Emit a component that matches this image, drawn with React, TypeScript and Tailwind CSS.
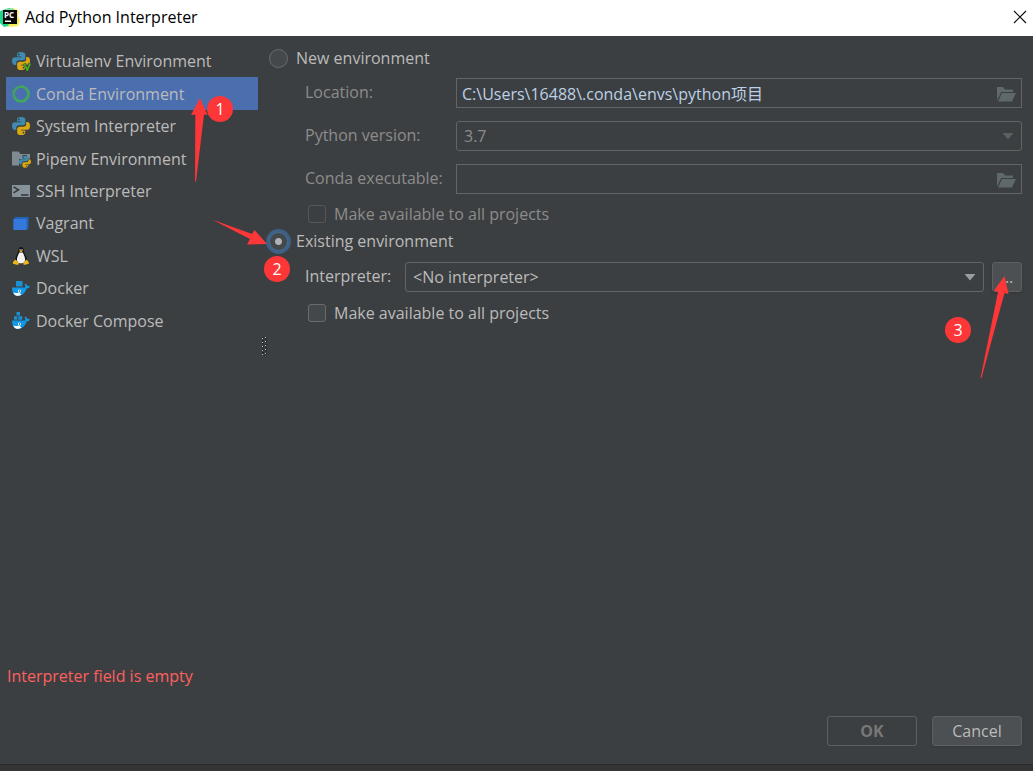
import { useState, type ReactNode } from "react";

const BLUE = "#3e8ab0";
const YELLOW = "#d9a80f";

function PythonShapes() {
  return (
    <>
      <path fill={BLUE} d="M9 0C5.800 0 5 1.200 5 2.600V4.500H9.200V5.200H2.800C1 5.200 0 6.700 0 9s1 3.900 2.700 3.900H4.300V10.900C4.300 9.400 5.500 8.300 7 8.300h4c1.300 0 2.300-1 2.300-2.300V2.600C13.300 1 12 0 9 0ZM6.800 1.500a.9.9 0 1 1 0 1.800.9.9 0 0 1 0-1.800Z" />
      <path fill={YELLOW} d="M9.200 18c3.200 0 4-1.200 4-2.600V13.500H9V12.800h6.300C17.100 12.800 18 11.300 18 9s-.9-3.900-2.600-3.900h-1.200V7.200c0 1.500-1.200 2.500-2.700 2.500h-4c-1.300 0-2.300 1-2.300 2.300v3.400C5.200 17 6.500 18 9.200 18Zm2.200-1.500a.9.9 0 1 1 0-1.800.9.9 0 0 1 0 1.800Z" />
    </>
  );
}

function Icon({ children }: { children: ReactNode }) {
  return (
    <svg className="size-[20px] shrink-0" viewBox="-1 -1 20 20" aria-hidden="true">
      {children}
    </svg>
  );
}

const whale = (
  <>
    <path fill="#0f9ae8" d="M0 8.500h13.200c.2-1 .1-2-.5-2.900l.8-1c.9.6 1.500 1.300 1.700 2.200 1-.1 2 0 2.800.6-.5 1.300-1.700 1.800-3.200 1.900C13.200 13.500 10.500 17 6 17 2.500 17 .2 14.500 0 8.500Z" />
    <path fill="#fff" d="M1.200 13.400c2 .7 4.500 1 6.800.2 0 1 .5 1.700 1.700 2-1.200.9-2.500 1.200-4 1.200-2 0-3.500-1.100-4.500-3.400Z" />
    <circle cx="7.500" cy="12" r="1.500" fill="#fff" />
    <circle cx="7.600" cy="12" r=".7" fill="#234" />
  </>
);

const items: { name: string; icon: ReactNode }[] = [
  {
    name: "Virtualenv Environment",
    icon: (
      <>
        <PythonShapes />
        <path d="m12.500 11.500 2.700 6 2.800-6" fill="none" stroke="#3c3f41" strokeWidth="3" />
        <path d="m12.300 11.500 2.900 6.500 2.900-6.500" fill="none" stroke="#43b81c" strokeWidth="1.700" />
      </>
    ),
  },
  {
    name: "Conda Environment",
    icon: (
      <>
        <circle cx="9" cy="9" r="7.500" fill="none" stroke="#43a85a" strokeWidth="2.700" />
        <path d="M2 12.500A7.900 7.900 0 0 1 9 1.100" fill="none" stroke="#4b6eaf" strokeWidth="1" strokeDasharray="1 1.300" />
        <path d="M3.500 11A6 6 0 0 1 8 3.100" fill="none" stroke="#4b6eaf" strokeWidth=".8" strokeDasharray="1 1.600" />
      </>
    ),
  },
  { name: "System Interpreter", icon: <PythonShapes /> },
  {
    name: "Pipenv Environment",
    icon: (
      <>
        <path fill="#7f8b91" d="M0 1.500h6.500l2 2.500H18V15.500H0z" />
        <path fill="#3c3f41" d="M10.500 5h4.500v3.500h3v7h-6.500H7V9h3.500z" />
        <svg x="7" y="5.500" width="12" height="12.500" viewBox="0 0 18 18">
          <PythonShapes />
        </svg>
      </>
    ),
  },
  {
    name: "SSH Interpreter",
    icon: (
      <>
        <path fill="#87939a" d="M0 3h18v12H0z" />
        <path d="m1.500 4.800 5 3-5 3M9 13h7.500" fill="none" stroke="#30363a" strokeWidth="1.500" />
      </>
    ),
  },
  {
    name: "Vagrant",
    icon: (
      <>
        <path fill="#2264b8" d="m1.500 5 2-2h13v11l-2 2h-13z" />
        <path fill="#3578dc" d="M1.500 5h13v11h-13z" />
      </>
    ),
  },
  {
    name: "WSL",
    icon: (
      <>
        <path fill="#151515" d="M9 0C7 0 6.300 1.500 6.400 3.500 6.400 5.800 3.500 9 3.200 13L6 17h6l3-4c-.3-4-3.300-7-3.300-9.500C11.700 1.300 11 0 9 0Z" />
        <path fill="#f2f2f2" d="M7.300 5.500h3.400c1.500 3 2.600 5 2.300 8-.3 2.200-1.800 3-4 3s-3.800-1-4-3c-.2-3 1-5.200 2.300-8Z" />
        <path fill="#efb61b" d="m7 3.800 2-.8 2 .8-2 1.800zM3.500 12.500l3.300 3.300c.4 1.500-.5 2.200-2 2L1 16.700c-.4-1.500.5-2.200.5-2.200ZM14.500 12.500l-3.200 3.300c-.3 1.500.5 2.200 2 2L17 16.400c.2-1-.8-2-.8-2Z" />
        <circle cx="8" cy="2.500" r=".6" fill="#ddd" />
        <circle cx="10" cy="2.500" r=".6" fill="#ddd" />
      </>
    ),
  },
  {
    name: "Docker",
    icon: (
      <>
        <path fill="#1c8fd0" d="M4 2h6.500v5.500H4z" />
        {whale}
      </>
    ),
  },
  {
    name: "Docker Compose",
    icon: (
      <>
        <path fill="#1c8fd0" d="M4.500 0H8v3.500H4.500zM2 4.300h3.300v3.500H2zM6.300 4.300h4v3.500h-4z" />
        {whale}
      </>
    ),
  },
];

function Badge({ n, className }: { n: number; className: string }) {
  return (
    <span className={`pointer-events-none absolute z-10 flex size-[26px] items-center justify-center rounded-full bg-[#fd3637] leading-none text-white ${className}`}>
      {n}
    </span>
  );
}

function FolderIcon() {
  return (
    <svg className="h-[15px] w-[20px]" viewBox="0 0 20 15" aria-hidden="true">
      <path fill="#5f686b" d="M1 0h6l2 2.500h8V5H5.300L1 13.500z" />
      <path fill="#5f686b" d="M6 6h14l-4 8.500H2z" />
    </svg>
  );
}

function PathField({ id, label, initial }: { id: string; label: string; initial: string }) {
  const [value, setValue] = useState(initial);
  return (
    <div className="flex h-[30px] items-center">
      <label htmlFor={id} className="w-[151px] shrink-0 pb-[2px] text-[#8c8c8c]">{label}</label>
      <div className="flex h-full flex-1 items-center border border-[#646464] pr-[5px]">
        <input
          id={id}
          value={value}
          onChange={(e) => setValue(e.target.value)}
          className="h-full min-w-0 flex-1 bg-transparent px-[5px] pb-px text-[#bcd0e6] outline-none"
        />
        <button type="button" aria-label={`Browse ${label}`} className="pt-[2px]"><FolderIcon /></button>
      </div>
    </div>
  );
}

function Caret({ color }: { color: string }) {
  return (
    <svg className="pointer-events-none absolute top-[12px] right-[8px] h-[7px] w-[12px]" viewBox="0 0 12 7" aria-hidden="true">
      <path d="M.5 0h11L6 6.500z" fill={color} />
    </svg>
  );
}

function Tick({ dim }: { dim?: boolean }) {
  return (
    <label className={`flex h-[26px] items-center gap-2 pl-[4px] ${dim ? "text-[#8c8c8c]" : "text-[#bbbbbb]"}`}>
      <input
        type="checkbox"
        className={`size-[18px] appearance-none rounded-[3px] border checked:bg-[#4b6eaf] ${dim ? "border-[#565656]" : "border-[#6b6b6b] bg-[#43494a]"}`}
      />
      Make available to all projects
    </label>
  );
}

export default function App() {
  const [selected, setSelected] = useState("Conda Environment");
  const [mode, setMode] = useState("existing");

  return (
    <div className="flex min-h-screen flex-col bg-[#3c3f41] font-['Open_Sans','Noto_Sans_CJK_SC',sans-serif] text-[16px] leading-[20px] text-[#bbbbbb]">
      <header className="flex h-[36px] items-center bg-white text-black">
        <svg className="size-[20px]" viewBox="0 0 20 20" aria-hidden="true">
          <path fill="#21d789" d="M0 3 9 0l6 2-2 15-9 2-4-4z" />
          <path fill="#f5ed58" d="m13 0 6 3-1 5 2 5-2 5-10 1z" />
          <path fill="#87e5a0" d="m6 1 7-1 3 6-9 9z" />
          <path fill="#080808" d="M3 2h14v14H3z" />
          <text x="4" y="9.500" fontSize="8" fontWeight="700" fill="#fff">PC</text>
          <path fill="#fff" d="M5 12.500h6v1.500H5z" />
        </svg>
        <h1 className="ml-[5px] flex-1 pb-[2px]">Add Python Interpreter</h1>
        <button type="button" aria-label="Close" className="mr-[6px] pb-[2px]">
          <svg className="size-[14px]" viewBox="0 0 14 14" aria-hidden="true">
            <path d="m1 1 12 12M13 1 1 13" stroke="#111" strokeWidth="1.200" />
          </svg>
        </button>
      </header>

      <div className="flex flex-1 pt-[9px]">
        <nav className="relative ml-[6px] w-[252px] shrink-0">
          <ul className="grid h-[292px] grid-rows-9">
            {items.map((it) => (
              <li key={it.name}>
                <button
                  type="button"
                  onClick={() => setSelected(it.name)}
                  className={`flex h-full w-full items-center gap-[5px] pl-[5px] text-left ${it.name === selected ? "bg-[#4b6eaf]" : ""}`}
                >
                  <Icon>{it.icon}</Icon>
                  {it.name}
                </button>
              </li>
            ))}
          </ul>
          <Badge n={1} className="top-[51px] left-[201px]" />
          <svg className="pointer-events-none absolute top-[53px] left-[184px] h-[84px] w-[18px]" viewBox="0 0 18 84" aria-hidden="true">
            <path fill="#fd3637" d="M10 0 17.500 17l-3.500-.5L6 83.500H5L5.300 16.500 1 17z" />
          </svg>
        </nav>

        <svg className="mt-[291px] ml-[2px] h-[20px] w-[8px] shrink-0" viewBox="0 0 8 20" aria-hidden="true">
          <path d="M3 1v18M6 2v18" stroke="#202020" strokeWidth="1.500" strokeDasharray="1.500 1.500" />
          <path d="M2.500 2v17M5.500 1v18" stroke="#c0c0c0" strokeWidth="1" strokeDasharray="1 3" />
        </svg>

        <main className="min-w-0 flex-1 pr-[11px]">
          <label className="flex h-[26px] items-center gap-2 pl-px">
            <input
              type="radio"
              name="environment"
              checked={mode === "new"}
              onChange={() => setMode("new")}
              className="size-[19px] appearance-none rounded-full border border-[#6b6b6b] bg-[#43494a] checked:bg-[radial-gradient(circle,#afb1b3_0_3px,#43494a_4px)]"
            />
            New environment
          </label>

          <div className="mt-[7px] ml-[37px] flex flex-col gap-[13px]">
            <PathField id="location" label="Location:" initial={"C:\\Users\\16488\\.conda\\envs\\python项目"} />
            <div className="flex h-[30px] items-center">
              <label htmlFor="version" className="w-[151px] shrink-0 pb-[2px] text-[#8c8c8c]">Python version:</label>
              <div className="relative h-full flex-1">
                <select id="version" className="h-full w-full appearance-none rounded-[3px] border border-[#646464] bg-[#3c3f41] px-[7px] pb-px text-[#8c8c8c]">
                  <option>3.7</option>
                </select>
                <Caret color="#5e6060" />
              </div>
            </div>
            <PathField id="executable" label="Conda executable:" initial="" />
          </div>
          <div className="mt-[7px] ml-[36px]"><Tick dim /></div>

          <div className="relative mt-px">
            <label className="flex h-[26px] items-center gap-2 pl-px">
              <input
                type="radio"
                name="environment"
                checked={mode === "existing"}
                onChange={() => setMode("existing")}
                className="size-[19px] appearance-none rounded-full border border-[#466d94] bg-[#43494a] checked:bg-[radial-gradient(circle,#afb1b3_0_3px,#43494a_4px)] checked:ring-3 checked:ring-[#3d6185]"
              />
              Existing environment
            </label>
            <svg className="pointer-events-none absolute top-[-9px] left-[-56px] h-[28px] w-[56px]" viewBox="0 0 56 28" aria-hidden="true">
              <path fill="#fd3637" d="M0 .5 38 20l-3 5.500 20-.5L42.500 11 40 15z" />
            </svg>
            <Badge n={2} className="top-[28px] left-[-4px]" />
          </div>

          <div className="relative mt-2 ml-[37px] flex h-[30px] items-center">
            <label htmlFor="interpreter" className="w-[100px] shrink-0 pb-[2px]">Interpreter:</label>
            <div className="relative h-full flex-1">
              <select id="interpreter" className="h-full w-full appearance-none rounded-[3px] border border-[#646464] bg-[#3c3f41] px-[7px] pb-px">
                <option>&lt;No interpreter&gt;</option>
              </select>
              <Caret color="#9a9da0" />
            </div>
            <button type="button" aria-label="Browse interpreters" className="ml-2 h-full w-[30px] rounded-[3px] border border-[#5e6060] bg-[#4c5052] shadow-sm">...</button>
            <Badge n={3} className="top-[55px] right-[51px]" />
            <svg className="pointer-events-none absolute top-[14px] right-[13px] h-[102px] w-[29px]" viewBox="0 0 29 102" aria-hidden="true">
              <path fill="#fd3637" d="M24.500 0 28.500 18l-4-1L1.500 102H.5L18 16l-4-1.500z" />
            </svg>
          </div>
          <div className="mt-2 ml-[36px]"><Tick /></div>
        </main>
      </div>

      <footer>
        <p role="alert" className="pl-[7px] text-[#ff5f5f]">Interpreter field is empty</p>
        <div className="mt-[30px] flex justify-end gap-[15px] pr-[11px]">
          <button type="button" disabled className="h-[30px] w-[90px] rounded-[3px] border border-[#5e6060] font-bold text-[#777777]">OK</button>
          <button type="button" className="h-[30px] w-[90px] rounded-[3px] border border-[#5e6060] bg-[#4c5052] shadow-sm">Cancel</button>
        </div>
        <div className="mt-[18px] h-[7px] border-t border-[#2b2c2d] bg-[#353535]" />
      </footer>
    </div>
  );
}
